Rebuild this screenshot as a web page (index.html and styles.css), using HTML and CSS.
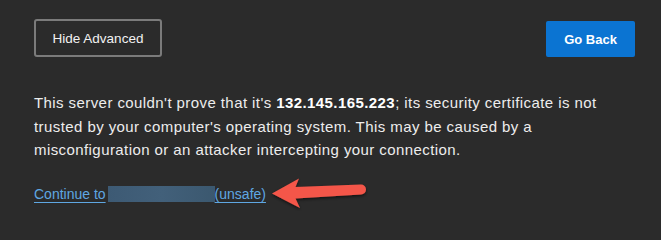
FILE: index.html
```html
<!DOCTYPE html>
<html>
<head>
<meta charset="utf-8">
<link rel="stylesheet" href="styles.css">
</head>
<body>
<div class="page">
  <div class="buttons">
    <button class="btn-secondary">Hide Advanced</button>
    <button class="btn-primary">Go Back</button>
  </div>
  <p class="details">This server couldn't prove that it's <strong>132.145.165.223</strong>; its security certificate is not trusted by your computer's operating system. This may be caused by a misconfiguration or an attacker intercepting your connection.</p>
  <div class="proceed">
    <a class="link" href="#">Continue to<span class="redacted"></span>(unsafe)</a>
    <svg class="arrow" width="100" height="36" viewBox="0 0 100 36">
      <defs>
        <filter id="sh" x="-20%" y="-40%" width="140%" height="180%">
          <feDropShadow dx="0" dy="1.5" stdDeviation="1.5" flood-color="#000" flood-opacity="0.6"/>
        </filter>
      </defs>
      <path filter="url(#sh)" fill="#f4574a" d="M4 18.5 L31 3.5 L27.5 12 L93 9.5 A5 5 0 0 1 93 19.5 L27.5 23.5 L32 33 Z"/>
    </svg>
  </div>
</div>
</body>
</html>
```

FILE: styles.css
```css
html, body {
  margin: 0;
  padding: 0;
  background: #2b2b2b;
  height: 224px;
  overflow: hidden;
}
body {
  font-family: "Liberation Sans", Arial, sans-serif;
  color: #ececec;
}
.page {
  padding: 19px 26px 0 34px;
}
.buttons {
  display: flex;
  justify-content: space-between;
  align-items: flex-end;
}
.btn-secondary {
  font-family: "Liberation Sans", Arial, sans-serif;
  font-size: 13.5px;
  color: #f2f2f2;
  background: #2b2b2b;
  border: 2px solid #7b7b7b;
  border-radius: 3px;
  width: 128px;
  height: 38px;
  padding: 0;
}
.btn-primary {
  font-family: "Liberation Sans", Arial, sans-serif;
  font-size: 13px;
  font-weight: bold;
  color: #ffffff;
  background: #0b74d2;
  border: none;
  border-radius: 2px;
  width: 89px;
  height: 36px;
  padding: 0;
}
.details {
  margin: 34px 0 0 0;
  font-size: 15px;
  letter-spacing: 0.42px;
  line-height: 23.5px;
  color: #ededed;
}
.details strong {
  font-weight: bold;
  color: #ffffff;
}
.proceed {
  display: flex;
  align-items: center;
  margin-top: 15px;
}
.link {
  font-size: 14px;
  color: #5fa7e2;
  text-decoration: underline;
  text-underline-offset: 3px;
  line-height: 18px;
}
.redacted {
  display: inline-block;
  width: 107px;
  height: 16px;
  vertical-align: -3px;
  margin-left: 2px;
  background: linear-gradient(90deg, #3d5a74, #42607a 50%, #3b586f);
}
.arrow {
  margin-left: 2px;
  margin-top: -2px;
}
```
